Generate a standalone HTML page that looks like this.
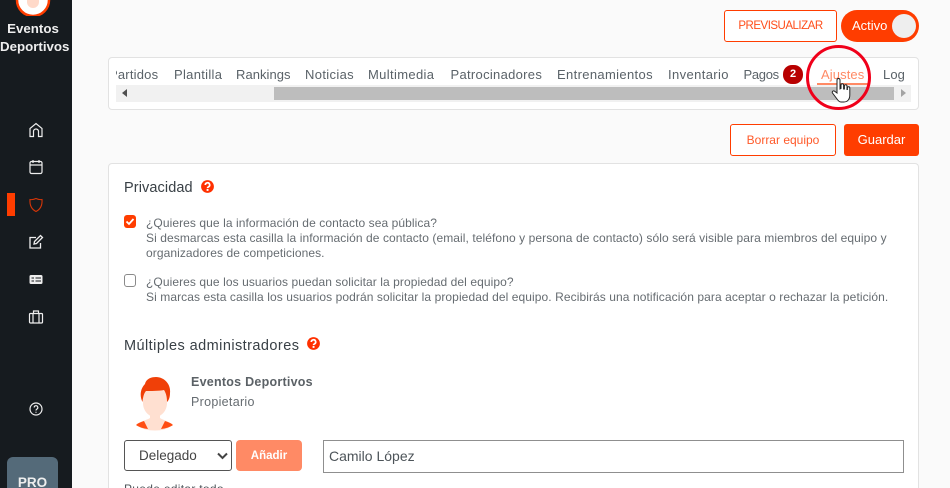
<!DOCTYPE html>
<html lang="es"><head><meta charset="utf-8"><title>Ajustes</title>
<style>
*{box-sizing:border-box}
html{margin:0;padding:0;width:950px;height:488px;overflow:hidden}
body{margin:0;padding:0;width:950px;height:488px;overflow:hidden;background:#fafafa;font-family:"Liberation Sans",sans-serif;color:#4d5459;position:relative}
#w{position:absolute;left:0;top:0;width:950px;height:488px;overflow:hidden}
.a{position:absolute;white-space:nowrap}
.side{position:absolute;left:0;top:0;width:72px;height:488px;background:#161b1f;overflow:hidden}
.tab{font-size:13px;color:#5a6268;letter-spacing:.38px;line-height:16px}
.btn{position:absolute;border-radius:3px;text-align:center}
.t{font-size:12px;color:#666c71;letter-spacing:.08px;line-height:15px}
</style></head><body><div id="w">
<div class="side">
<div class="a" style="left:15px;top:0;width:36px;height:16px;overflow:hidden"><svg class="a" style="left:0;top:-14px" width="36" height="30" viewBox="0 0 36 30"><circle cx="18" cy="14" r="16" fill="#fff" stroke="#ff3d00" stroke-width="2.500"/><path d="M12 8h12v8a6 6 0 0 1-12 0z" fill="#ffd9c9"/></svg></div>
<div class="a" style="left:0;width:66px;top:20px;text-align:center;color:#eee;font-weight:bold;font-size:13.300px;line-height:18px">Eventos<br>Deportivos</div>
<svg class="a" style="left:28px;top:122px" width="16" height="16" viewBox="0 0 16 16" fill="none" stroke="#eee" stroke-width="1.200"><path d="M2 14.500V6.500L8 1.500l6 5v8h-3.500V9.500a2.500 2.500 0 0 0-5 0v5z"/></svg>
<svg class="a" style="left:28px;top:159px" width="16" height="16" viewBox="0 0 16 16" fill="none" stroke="#eee" stroke-width="1.200"><rect x="2" y="2.500" width="12" height="12" rx="1.500"/><path d="M2 6h12M5 1v3M11 1v3"/></svg>
<div class="a" style="left:7px;top:193px;width:8px;height:23px;background:#ff3d00"></div>
<svg class="a" style="left:28px;top:197px" width="16" height="16" viewBox="0 0 16 16" fill="none" stroke="#d63608" stroke-width="1.100"><path d="M2 2.500Q5 3 8 1.500Q11 3 14 2.500C14.500 9 12 12.500 8 14.500C4 12.500 1.500 9 2 2.500z"/></svg>
<svg class="a" style="left:28px;top:234px" width="16" height="16" viewBox="0 0 16 16" fill="none" stroke="#eee" stroke-width="1.300"><path d="M12.500 9v5H2V3.500h6"/><path d="M6 10l.5-2.500L12.500 1.500l2 2L8.500 9.500z"/></svg>
<svg class="a" style="left:28px;top:272px" width="16" height="16" viewBox="0 0 16 16"><rect x="1.500" y="3" width="13" height="9" rx="1.500" fill="#eee"/><path d="M7.500 6h5.500M7.500 9h5.500M3.500 6h2.500M3.500 9h2.500" stroke="#161b1f" stroke-width="1.100"/></svg>
<svg class="a" style="left:28px;top:309px" width="16" height="16" viewBox="0 0 16 16" fill="none" stroke="#eee" stroke-width="1.200"><rect x="1.500" y="4.500" width="13" height="9.500" rx="1"/><path d="M5.500 4.500V2h5v2.500M5 4.500V14M11 4.500V14"/></svg>
<svg class="a" style="left:28px;top:401px" width="16" height="16" viewBox="0 0 16 16" fill="none" stroke="#eee" stroke-width="1.200"><circle cx="8" cy="8" r="6"/><path d="M6.200 6.500a1.800 1.800 0 1 1 2.600 1.600C8.200 8.500 8 8.800 8 9.500M8 10.800v1"/></svg>
<div class="a" style="left:7px;top:457px;width:51px;height:31px;overflow:hidden;border-radius:6px 6px 0 0;background:#546a79;color:#eee;font-weight:bold;font-size:13.500px;text-align:center;padding-top:18px;line-height:15px">PRO</div>
</div>

<div class="btn" style="left:724px;top:10px;width:113px;height:32px;border:1px solid #ff3d00;background:#fff;color:#ff4d1a;font-size:11.500px;letter-spacing:-.5px;line-height:30px">PREVISUALIZAR</div>
<div class="a" style="left:841px;top:10px;width:78px;height:32px;border-radius:16px;background:#ff3d00;color:#fff;font-size:13px;line-height:31px;padding-left:11px">Activo</div>
<div class="a" style="left:892px;top:14px;width:24px;height:24px;border-radius:50%;background:#eee"></div>

<div class="a" style="left:108px;top:57px;width:811px;height:53px;background:#fff;border:1px solid #e2e2e2;border-radius:4px"></div>
<div class="a" style="left:116px;top:60px;width:794px;height:30px;overflow:hidden">
<div class="a tab" style="left:-7px;top:7px;letter-spacing:.2px">Partidos</div>
<div class="a tab" style="left:58px;top:7px;letter-spacing:.3px">Plantilla</div>
<div class="a tab" style="left:120px;top:7px;letter-spacing:.05px">Rankings</div>
<div class="a tab" style="left:189px;top:7px;letter-spacing:.35px">Noticias</div>
<div class="a tab" style="left:252px;top:7px;letter-spacing:.35px">Multimedia</div>
<div class="a tab" style="left:334.500px;top:7px;letter-spacing:.3px">Patrocinadores</div>
<div class="a tab" style="left:441px;top:7px;letter-spacing:.35px">Entrenamientos</div>
<div class="a tab" style="left:552px;top:7px">Inventario</div>
<div class="a tab" style="left:627.500px;top:7px;letter-spacing:-.3px">Pagos</div>
<div class="a tab" style="left:705px;top:7px;color:#ff8a65;letter-spacing:.1px">Ajustes</div>
<div class="a tab" style="left:767px;top:7px;letter-spacing:.1px">Log</div>
</div>
<div class="a" style="left:783px;top:65px;width:20px;height:19px;border-radius:9px;background:#b80000;color:#fff;font-weight:bold;font-size:11px;line-height:19px;text-align:center">2</div>
<div class="a" style="left:817px;top:83px;width:51px;height:2px;background:#ff8a65"></div>
<div class="a" style="left:116px;top:85px;width:795px;height:17px;background:#f1f1f1"></div>
<div class="a" style="left:274px;top:87px;width:620px;height:13px;background:#bdbdbd"></div>
<div class="a" style="left:122px;top:89px;border:4px solid transparent;border-right:5px solid #505050;border-left:0"></div>
<div class="a" style="left:901px;top:89px;border:4px solid transparent;border-left:5px solid #a3a3a3;border-right:0"></div>
<svg class="a" style="left:805px;top:44px" width="68" height="68" viewBox="0 0 68 68" fill="none"><circle cx="33.500" cy="33.500" r="31" stroke="#f0001a" stroke-width="3"/></svg>
<svg class="a" style="left:831px;top:77px" width="20" height="28" viewBox="0 0 20 28"><path d="M6 3a1.500 1.500 0 0 1 3 0v9l1-.5V8a1.300 1.300 0 0 1 2.600 0v4l.8 0V9a1.300 1.300 0 0 1 2.600 0v3.500l.4 0V11a1.200 1.200 0 0 1 2.400 0v7c0 4-2 7-6 7H10c-2 0-3-1.500-4-3L1.500 16c-1-1.500 1-3 2.500-1.500L6 16z" fill="#fff" stroke="#222" stroke-width="1"/></svg>

<div class="btn" style="left:730px;top:124px;width:106px;height:32px;border:1px solid #ff3d00;background:#fff;color:#ff5a2a;font-size:12px;line-height:30px">Borrar equipo</div>
<div class="btn" style="left:844px;top:124px;width:75px;height:32px;background:#ff3d00;color:#fff;font-size:13px;line-height:32px">Guardar</div>

<div class="a" style="left:108px;top:163px;width:811px;height:325px;background:#fff;border:1px solid #e2e2e2;border-bottom:0;border-radius:4px 4px 0 0"></div>
<div class="a" style="left:124px;top:179px;font-size:14.500px;letter-spacing:.1px;color:#394046;line-height:18px">Privacidad</div>
<svg class="a" style="left:201px;top:180px" width="13" height="13" viewBox="0 0 13 13"><circle cx="6.500" cy="6.500" r="6.400" fill="#ff3000"/><path d="M4.300 5a2.200 2.200 0 1 1 3.200 1.900C6.700 7.300 6.500 7.500 6.500 8.100" fill="none" stroke="#fff" stroke-width="1.700"/><rect x="5.600" y="9" width="1.900" height="1.900" fill="#fff"/></svg>

<div class="a" style="left:124px;top:215px;width:12px;height:13px;border-radius:3px;background:#ff3d00"></div>
<svg class="a" style="left:124px;top:215px" width="12" height="13" viewBox="0 0 12 13"><path d="M2.500 6.500l2.500 2.500 4.500-5" fill="none" stroke="#fff" stroke-width="1.800"/></svg>
<div class="a t" style="left:146px;top:216px">¿Quieres que la información de contacto sea pública?</div>
<div class="a t" style="left:146px;top:231px">Si desmarcas esta casilla la información de contacto (email, teléfono y persona de contacto) sólo será visible para miembros del equipo y</div>
<div class="a t" style="left:146px;top:246px">organizadores de competiciones.</div>
<div class="a" style="left:124px;top:274px;width:12px;height:13px;border-radius:3px;background:#fff;border:1px solid #8a8a8a"></div>
<div class="a t" style="left:146px;top:275px">¿Quieres que los usuarios puedan solicitar la propiedad del equipo?</div>
<div class="a t" style="left:146px;top:290px">Si marcas esta casilla los usuarios podrán solicitar la propiedad del equipo. Recibirás una notificación para aceptar o rechazar la petición.</div>

<div class="a" style="left:124px;top:337px;font-size:14.500px;letter-spacing:.44px;color:#394046;line-height:18px">Múltiples administradores</div>
<svg class="a" style="left:307px;top:337px" width="13" height="13" viewBox="0 0 13 13"><circle cx="6.500" cy="6.500" r="6.400" fill="#ff3000"/><path d="M4.300 5a2.200 2.200 0 1 1 3.200 1.900C6.700 7.300 6.500 7.500 6.500 8.100" fill="none" stroke="#fff" stroke-width="1.700"/><rect x="5.600" y="9" width="1.900" height="1.900" fill="#fff"/></svg>

<svg class="a" style="left:135px;top:376px" width="40" height="56" viewBox="0 0 40 56">
<path d="M1 49C6 45 12 44 15 42V34H25V42C28 44 33 45 38 49C33 53 27 54.500 20 54.500S6 53 1 49z" fill="#ffe0d1"/>
<path d="M1 49C3 47 6 46 9 45L13 53C8 52.500 4 51 1 49zM38 49C36 47 33 46 30 45L26 53C31 52.500 35 51 38 49z" fill="#ff4d12"/>
<path d="M8 13H32V27C32 35 26 41 20 41S8 35 8 27z" fill="#ffe0d1"/>
<path d="M7.500 26C4 19 6 12 10 8C11 3 16 1 21 1C29 1 36 8 35 17C35 21 34 24 32 26C32 21 31 17 29 14C24 15 15 15 11 15C9 17 8 21 7.500 26z" fill="#f04008"/>
</svg>
<div class="a" style="left:191px;top:374px;font-size:12.500px;font-weight:bold;color:#5b6166;letter-spacing:.25px;line-height:16px">Eventos Deportivos</div>
<div class="a" style="left:191px;top:394px;font-size:12.500px;color:#666c71;letter-spacing:.3px;line-height:16px">Propietario</div>

<div class="a" style="left:124px;top:440px;width:108px;height:31px;border:1px solid #555;border-radius:3px;background:#fff;font-size:13.500px;color:#444;line-height:29px;padding-left:14px">Delegado</div>
<svg class="a" style="left:217px;top:452px" width="11" height="8" viewBox="0 0 11 8"><path d="M1 1.500l4.500 4.500 4.500-4.500" fill="none" stroke="#444" stroke-width="2"/></svg>
<div class="btn" style="left:236px;top:440px;width:66px;height:31px;background:#ff8a65;color:#fff;font-size:11.500px;font-weight:bold;line-height:32px;border-radius:4px">Añadir</div>
<div class="a" style="left:323px;top:440px;width:581px;height:33px;border:1px solid #8f8f8f;background:#fff;font-size:14px;color:#4d5459;line-height:31px;padding-left:5px">Camilo López</div>
<div class="a" style="left:124px;top:482px;width:200px;height:6px;overflow:hidden;font-size:12px;color:#4d5459;letter-spacing:.3px;line-height:15px">Puede editar todo</div>
</div></body></html>
